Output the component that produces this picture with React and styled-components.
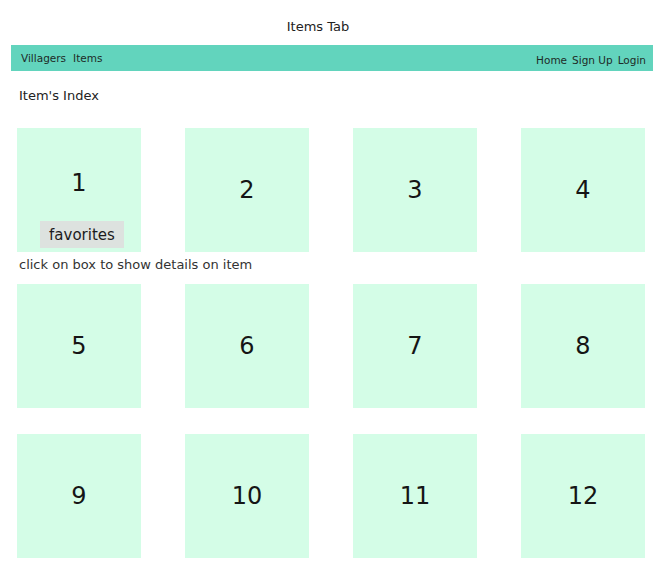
import styled, { createGlobalStyle } from "styled-components";

const GlobalStyle = createGlobalStyle`
  body {
    margin: 0;
    background: #ffffff;
    font-family: "DejaVu Sans", Verdana, sans-serif;
    color: #222222;
  }
`;

const Page = styled.div`
  width: 672px;
  display: flex;
  flex-direction: column;
`;

const Title = styled.h1`
  margin: 18px 0 0;
  font-size: 13px;
  font-weight: 400;
  line-height: 18px;
  text-align: center;
  padding-right: 36px;
`;

const NavBar = styled.nav`
  margin: 9px 19px 0 11px;
  height: 26px;
  background: #62d4bd;
  display: flex;
  align-items: center;
  justify-content: space-between;
  padding: 0 7px 0 10px;
  font-size: 10.5px;
`;

const NavGroup = styled.div`
  display: flex;
  gap: ${(p) => p.$gap}px;
  padding-top: ${(p) => p.$drop}px;
`;

const NavLink = styled.span`
  color: #1e2b27;
`;

const Heading = styled.h2`
  margin: 17px 0 0 19px;
  font-size: 13px;
  font-weight: 400;
  line-height: 16px;
`;

const Grid = styled.div`
  display: grid;
  grid-template-columns: repeat(4, 124px);
  justify-content: space-between;
  row-gap: 26px;
  margin: ${(p) => p.$top}px 27px 0 17px;
`;

const Box = styled.div`
  height: 124px;
  background: #d4fde7;
  display: flex;
  flex-direction: column;
  align-items: center;
  justify-content: ${(p) => (p.$fav ? "space-between" : "center")};
  padding: ${(p) => (p.$fav ? "40px 0 4px" : "0")};
  box-sizing: border-box;
`;

const Number = styled.span`
  font-size: 24px;
  line-height: 30px;
  color: #151515;
`;

const FavButton = styled.button`
  border: none;
  background: #dde2df;
  height: 27px;
  padding: 0 9px;
  margin-left: 6px;
  font-family: "DejaVu Sans", Verdana, sans-serif;
  font-size: 15px;
  color: #1c1c1c;
  cursor: pointer;
`;

const Caption = styled.p`
  margin: 5px 0 0 19px;
  font-size: 13px;
  line-height: 16px;
  color: #333333;
`;

export default function App() {
  const rest = [5, 6, 7, 8, 9, 10, 11, 12];
  return (
    <Page>
      <GlobalStyle />
      <Title>Items Tab</Title>
      <NavBar>
        <NavGroup $gap={7} $drop={0}>
          <NavLink>Villagers</NavLink>
          <NavLink>Items</NavLink>
        </NavGroup>
        <NavGroup $gap={5} $drop={3}>
          <NavLink>Home</NavLink>
          <NavLink>Sign Up</NavLink>
          <NavLink>Login</NavLink>
        </NavGroup>
      </NavBar>
      <Heading>Item's Index</Heading>
      <Grid $top={24}>
        <Box $fav>
          <Number>1</Number>
          <FavButton>favorites</FavButton>
        </Box>
        {[2, 3, 4].map((n) => (
          <Box key={n}>
            <Number>{n}</Number>
          </Box>
        ))}
      </Grid>
      <Caption>click on box to show details on item</Caption>
      <Grid $top={11}>
        {rest.map((n) => (
          <Box key={n}>
            <Number>{n}</Number>
          </Box>
        ))}
      </Grid>
    </Page>
  );
}
